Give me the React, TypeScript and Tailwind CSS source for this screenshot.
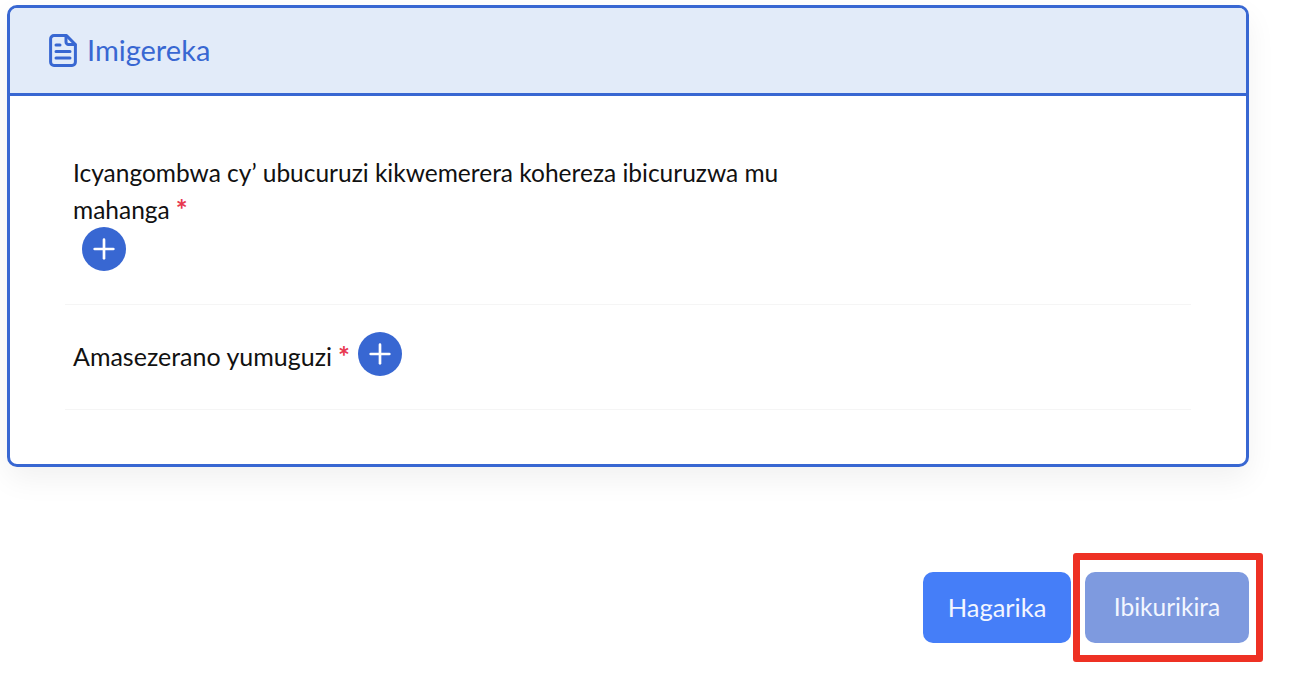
import { Plus } from 'lucide-react';

const font = { fontFamily: '"Lato", "Noto Sans", sans-serif' };

const FileIcon = () => (
  <svg width="28" height="33" viewBox="0 0 28 33" fill="none" stroke="#3867d2" strokeWidth="3" strokeLinecap="round" strokeLinejoin="round">
    <path d="M5 1.6h12.5L26.4 10.5V28a3.4 3.4 0 0 1-3.4 3.4H5A3.4 3.4 0 0 1 1.6 28V5A3.4 3.4 0 0 1 5 1.6Z" />
    <path d="M17 2v6a2.5 2.5 0 0 0 2.5 2.5H26" />
    <path d="M7 11h4M7 17.5h14M7 24h14" />
  </svg>
);

const AddButton = () => (
  <button className="flex h-[44px] w-[44px] shrink-0 items-center justify-center rounded-full bg-[#3867d2] text-white">
    <Plus size={32} strokeWidth={2} />
  </button>
);

const Required = () => <span className="ml-[6px] inline-block align-top text-[28px] font-bold leading-[37px] text-[#e8384f]">*</span>;

export default function App() {
  return (
    <div className="h-[686px] w-[1298px] overflow-hidden bg-white pl-[7px] pt-[5px] text-[#111]" style={font}>
      {/* Card */}
      <div className="h-[462px] w-[1242px] overflow-hidden rounded-[10px] border-[3px] border-[#3867d2] bg-white shadow-[0_12px_30px_rgba(0,0,0,0.06)]">
        <div className="flex h-[88px] items-center gap-[10px] border-b-[3px] border-[#3867d2] bg-[#e2ebf9] pb-[1px] pl-[39px]">
          <FileIcon />
          <span className="text-[29px] text-[#3867d2]">Imigereka</span>
        </div>
        <div className="px-[55px] pt-[60px]">
          <div className="h-[151px] border-b border-[#f5f5f5] pl-[8px] pr-[9px]">
            <p className="mt-[-2px] w-[730px] text-[24.5px] leading-[37px]">
              Icyangombwa cy’ ubucuruzi kikwemerera kohereza ibicuruzwa mu mahanga
              <Required />
            </p>
            <div className="ml-[9px] mt-[-1px]">
              <AddButton />
            </div>
          </div>
          <div className="flex h-[105px] items-start gap-[8px] border-b border-[#f5f5f5] pl-[8px] pr-[9px] pt-[27px]">
            <p className="pt-[6px] text-[25px] leading-[37px]">
              Amasezerano yumuguzi
              <Required />
            </p>
            <AddButton />
          </div>
        </div>
      </div>

      {/* Actions */}
      <div className="mt-[105px] flex w-[1242px] justify-end gap-[14px]">
        <button className="h-[71px] w-[148px] rounded-[10px] bg-[#457ef8] text-[25.5px] text-[#f2f6ff]">Hagarika</button>
        <div className="relative">
          <button className="h-[71px] w-[164px] rounded-[10px] bg-[#7e9adf] text-[24.5px] text-[#f2f6ff]">Ibikurikira</button>
          {/* Red annotation box */}
          <div className="absolute bottom-[-19px] left-[-12px] right-[-14px] top-[-19px] rounded-[3px] border-[7px] border-[#ee3124]" />
        </div>
      </div>
    </div>
  );
}
